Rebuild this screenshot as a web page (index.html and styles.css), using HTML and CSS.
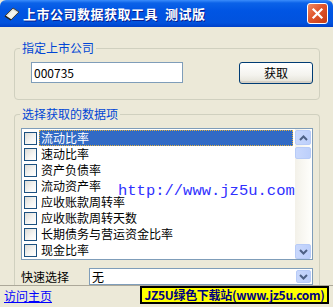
FILE: index.html
```html
<!DOCTYPE html>
<html lang="zh-CN">
<head>
    <meta charset="UTF-8">
    <title>上市公司数据获取工具 测试版</title>
    <link rel="stylesheet" href="styles.css">
</head>
<body>
    <div class="window">
        <!-- Title bar -->
        <div class="titlebar">
            <svg class="app-icon" width="16" height="14" viewBox="0 0 16 14">
                <polygon points="1,9 9,1 15,5 7,13" fill="#d8d8d0" stroke="#404040" stroke-width="1"/>
                <polygon points="3,9 9,3 13,5.5 7,11.5" fill="#f4f4ee"/>
                <line x1="1" y1="9" x2="7" y2="13" stroke="#202020" stroke-width="1.5"/>
            </svg>
            <span class="title">上市公司数据获取工具&nbsp;&nbsp;测试版</span>
            <div class="close-btn">
                <svg width="13" height="13" viewBox="0 0 13 13">
                    <path d="M2.5 2.5 L10.5 10.5 M10.5 2.5 L2.5 10.5" stroke="#fff" stroke-width="2.2" stroke-linecap="square"/>
                </svg>
            </div>
        </div>

        <div class="client">
            <fieldset class="group group-company">
                <legend>指定上市公司</legend>
                <div class="company-row">
                    <div class="code-input">000735</div>
                    <div class="fetch-btn">获取</div>
                </div>
            </fieldset>

            <fieldset class="group group-items">
                <legend>选择获取的数据项</legend>
                <div class="listbox">
                    <ul class="items" id="item-list"></ul>
                    <div class="vscroll">
                        <div class="sb-btn"><svg width="9" height="6" viewBox="0 0 9 6"><path d="M1 5 L4.5 1.5 L8 5" fill="none" stroke="#4d6185" stroke-width="2"/></svg></div>
                        <div class="sb-thumb"></div>
                        <div class="sb-track"></div>
                        <div class="sb-btn"><svg width="9" height="6" viewBox="0 0 9 6"><path d="M1 1 L4.5 4.5 L8 1" fill="none" stroke="#4d6185" stroke-width="2"/></svg></div>
                    </div>
                    <div class="watermark">http://www.jz5u.com</div>
                </div>
                <div class="quick-row">
                    <span class="quick-label">快速选择</span>
                    <div class="combo">
                        <span class="combo-text">无</span>
                        <div class="combo-btn"><svg width="9" height="6" viewBox="0 0 9 6"><path d="M1 1 L4.5 4.5 L8 1" fill="none" stroke="#4d6185" stroke-width="2"/></svg></div>
                    </div>
                </div>
            </fieldset>
        </div>

        <div class="statusbar">
            <a class="home-link" href="#">访问主页</a>
            <div class="ad">JZ5U绿色下载站(www.jz5u.com)</div>
        </div>
    </div>

    <script>
        var items = ["流动比率", "速动比率", "资产负债率", "流动资产率", "应收账款周转率",
                     "应收账款周转天数", "长期债务与营运资金比率", "现金比率"];
        var html = '';
        for (var i = 0; i < items.length; i++) {
            html += '<li class="item"><span class="check"></span>' +
                    '<span class="item-text' + (i === 0 ? ' selected' : '') + '">' + items[i] + '</span></li>';
        }
        document.getElementById('item-list').innerHTML = html;
    </script>
</body>
</html>
```

FILE: styles.css
```css
body {
    margin: 0;
    padding: 0;
    background-color: #ece9d8;
    font-family: "Noto Sans CJK SC", "Liberation Sans", sans-serif;
    font-size: 12px;
}

.window {
    width: 333px;
    height: 307px;
    overflow: hidden;
    background-color: #ece9d8;
}

/* Title bar */
.titlebar {
    height: 27px;
    display: flex;
    align-items: center;
    border-radius: 6px 6px 0 0;
    background: linear-gradient(#3b8dfb 0, #0b62e8 3px, #0055e3 40%, #0152dd 85%, #0040c8 100%);
}

.app-icon {
    margin-left: 4px;
    margin-top: 1px;
}

.title {
    margin-left: 3px;
    color: #fff;
    font-weight: bold;
    font-size: 13px;
    letter-spacing: 0.5px;
    text-shadow: 1px 1px 0 #0a1e8c;
}

.close-btn {
    margin-left: auto;
    margin-right: 5px;
    width: 19px;
    height: 19px;
    border: 1px solid #fff;
    border-radius: 3px;
    background: linear-gradient(135deg, #f08a64, #e0552c 45%, #c53b14);
    display: flex;
    align-items: center;
    justify-content: center;
}

/* Group boxes */
.group {
    margin: 0 13px 0 14px;
    padding: 0;
    border: 1px solid #d0d0bf;
    border-radius: 4px;
    min-width: 0;
}

.group legend {
    margin-left: 5px;
    padding: 0 2px;
    color: #0046d5;
    line-height: 14px;
    font-size: 12px;
}

.group-company {
    margin-top: 14px;
}

.company-row {
    display: flex;
    justify-content: space-between;
    align-items: flex-start;
    padding: 7px 6px 15px 16px;
}

.code-input {
    width: 148px;
    height: 19px;
    line-height: 19px;
    padding-left: 2px;
    border: 1px solid #7f9db9;
    background-color: #fff;
}

.fetch-btn {
    width: 72px;
    height: 20px;
    line-height: 20px;
    text-align: center;
    border: 1px solid #003c74;
    border-radius: 3px;
    background: linear-gradient(#ffffff, #f4f3ee 60%, #e3e1d6);
    box-shadow: inset 0 -2px 0 #d6d0c5;
}

.group-items {
    margin-top: 7px;
    border-bottom: none;
    border-radius: 4px 4px 0 0;
}

/* List box */
.listbox {
    position: relative;
    margin: 7px 0 0 6px;
    width: 290px;
    height: 130px;
    border: 1px solid #7f9db9;
    background-color: #fff;
    display: flex;
}

.items {
    list-style: none;
    margin: 0;
    padding: 1px 0 0 0;
    flex: 1;
}

.item {
    height: 16px;
    display: flex;
    align-items: center;
}

.check {
    width: 11px;
    height: 11px;
    margin-left: 2px;
    border: 1px solid #1c5180;
    background: linear-gradient(135deg, #dcdcd7, #f6f6f4 60%, #ffffff);
}

.item-text {
    flex: 1;
    margin: 0 2px 0 2px;
    padding-left: 2px;
    height: 16px;
    line-height: 16px;
    box-sizing: border-box;
}

.item-text.selected {
    background-color: #316ac5;
    color: #fff;
    outline: 1px dotted #e0b040;
    outline-offset: -1px;
}

.vscroll {
    width: 16px;
    margin-right: 1px;
    display: flex;
    flex-direction: column;
    background: linear-gradient(90deg, #f3f1e9, #fefefb);
    padding-top: 1px;
}

.sb-btn,
.sb-thumb {
    border: 1px solid #b7cbf7;
    border-radius: 2px;
    background: linear-gradient(90deg, #c9d8fc, #bccffb);
    display: flex;
    align-items: center;
    justify-content: center;
    box-sizing: border-box;
    height: 15px;
}

.sb-thumb {
    height: 12px;
    margin-top: 2px;
}

.sb-track {
    flex: 1;
}

.watermark {
    position: absolute;
    left: 96px;
    top: 55px;
    font-family: "Liberation Mono", monospace;
    font-size: 15.5px;
    line-height: 15px;
    color: #3030ff;
}

/* Quick select */
.quick-row {
    display: flex;
    align-items: center;
    margin-top: 8px;
    padding-left: 6px;
    height: 17px;
}

.quick-label {
    width: 68px;
}

.combo {
    width: 222px;
    height: 15px;
    border: 1px solid #7f9db9;
    background-color: #fff;
    display: flex;
    align-items: center;
}

.combo-text {
    padding-left: 2px;
    flex: 1;
}

.combo-btn {
    width: 15px;
    height: 13px;
    margin-right: 1px;
    border: 1px solid #b7cbf7;
    border-radius: 2px;
    background: linear-gradient(90deg, #c9d8fc, #bccffb);
    display: flex;
    align-items: center;
    justify-content: center;
    box-sizing: border-box;
}

/* Status bar */
.statusbar {
    border-top: 1px solid #aca899;
    display: flex;
    justify-content: space-between;
    align-items: flex-start;
    padding: 0 4px 0 4px;
}

.home-link {
    color: #0000ff;
    margin-top: 3px;
    line-height: 14px;
}

.ad {
    width: 185px;
    height: 14px;
    line-height: 14px;
    border: 2px solid #000;
    background-color: #ffff00;
    color: #000080;
    font-weight: bold;
    text-align: center;
    letter-spacing: -0.3px;
    white-space: nowrap;
}
```
